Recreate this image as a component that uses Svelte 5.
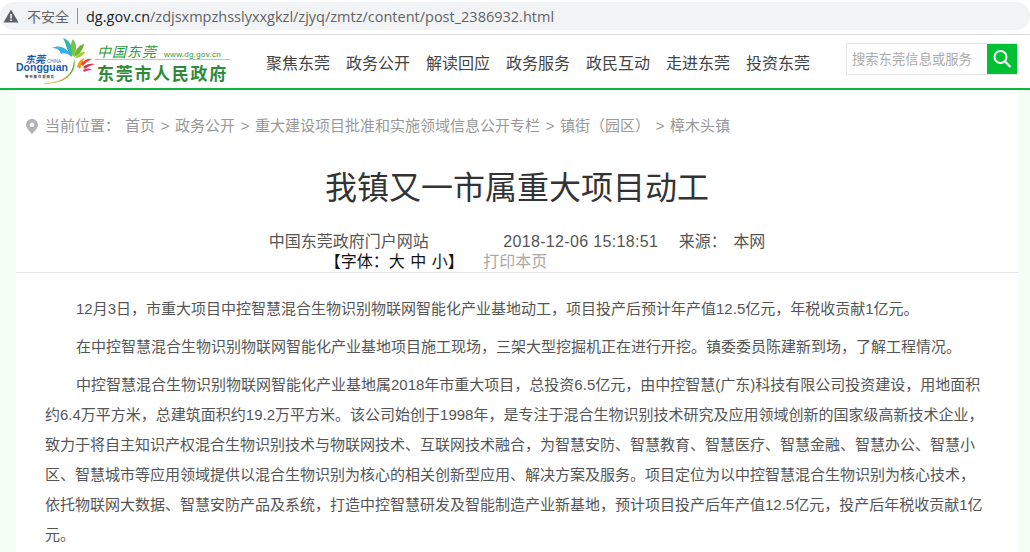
<script lang="ts">
  const navItems = ['聚焦东莞', '政务公开', '解读回应', '政务服务', '政民互动', '走进东莞', '投资东莞']
  const crumbs = ['首页', '政务公开', '重大建设项目批准和实施领域信息公开专栏', '镇街（园区）', '樟木头镇']
  const paragraphs = [
    '12月3日，市重大项目中控智慧混合生物识别物联网智能化产业基地动工，项目投产后预计年产值12.5亿元，年税收贡献1亿元。',
    '在中控智慧混合生物识别物联网智能化产业基地项目施工现场，三架大型挖掘机正在进行开挖。镇委委员陈建新到场，了解工程情况。',
    '中控智慧混合生物识别物联网智能化产业基地属2018年市重大项目，总投资6.5亿元，由中控智慧(广东)科技有限公司投资建设，用地面积约6.4万平方米，总建筑面积约19.2万平方米。该公司始创于1998年，是专注于混合生物识别技术研究及应用领域创新的国家级高新技术企业，致力于将自主知识产权混合生物识别技术与物联网技术、互联网技术融合，为智慧安防、智慧教育、智慧医疗、智慧金融、智慧办公、智慧小区、智慧城市等应用领域提供以混合生物识别为核心的相关创新型应用、解决方案及服务。项目定位为以中控智慧混合生物识别为核心技术，依托物联网大数据、智慧安防产品及系统，打造中控智慧研发及智能制造产业新基地，预计项目投产后年产值12.5亿元，投产后年税收贡献1亿元。'
  ]
</script>

<div class="browser-bar">
  <div class="omnibox">
    <svg class="warn" viewBox="0 0 16 14" width="16" height="14"><path d="M8 0.5 L15.5 13.5 H0.5 Z" fill="#5f6368"/><rect x="7.2" y="5" width="1.6" height="4.5" fill="#f1f3f4"/><rect x="7.2" y="10.4" width="1.6" height="1.6" fill="#f1f3f4"/></svg>
    <span class="insecure">不安全</span>
    <span class="divider"></span>
    <span class="url"><b>dg.gov.cn</b>/zdjsxmpzhsslyxxgkzl/zjyq/zmtz/content/post_2386932.html</span>
  </div>
</div>

<header class="site-header">
  <svg class="logo" viewBox="0 0 225 50" width="225" height="50">
    <!-- petals -->
    <path d="M62 20 C58 11 49 7 42 11 C47 11 50 13 51 17 C54 15 58 17 62 20 Z" fill="#2fb2e8"/>
    <path d="M62 20 C56 13 56 6 53 1 C60 3 64 11 62 20 Z" fill="#2fb8a8"/>
    <path d="M63 20 C60 12 60 7 63 2 C67 7 67 14 63 20 Z" fill="#7cc242"/>
    <path d="M64 20 C65 13 69 8 74 7 C73 13 69 18 64 20 Z" fill="#6ab42d"/>
    <path d="M65 21 C68 16 72 14 75 15 C73 19 69 21 65 21 Z" fill="#a6cf3c"/>
    <!-- stem -->
    <path d="M35 46 C50 47 64 40 64 21 C68 36 54 48 35 46 Z" fill="#5fae2e"/>
    <path d="M34 47 C44 46 54 43 60 37" fill="none" stroke="#f3a43a" stroke-width="0.7"/>
    <!-- red bloom -->
    <path d="M67 30 C68 25 71 22 74 21 C73 25 72 28 70 32 Z" fill="#f39a1e"/>
    <path d="M71 27 C74 23 78 21 82 22 C78 24 75 26 73 29 Z" fill="#e8452f"/>
    <path d="M73 30 C76 27 81 26 85 27 C81 28 77 30 75 32 Z" fill="#d9304f"/>
    <path d="M73 33 C76 31 80 31 82 33 C79 33 76 34 74 35 Z" fill="#e23c72"/>
    <!-- dongguan wordmark -->
    <text x="15" y="26" class="dg-cn">东莞</text>
    <text x="37" y="26" class="dg-china">CHINA</text>
    <text x="6" y="34" class="dg-en">Dongguan</text>
    <text x="15" y="41" class="dg-tag">每天都在更精彩</text>
    <!-- site name -->
    <text x="87" y="20" class="cn-brush">中国东莞</text>
    <text x="154" y="20" class="cn-url">www.dg.gov.cn</text>
    <rect x="85" y="22" width="135" height="1" fill="#a9d6a4"/>
    <text x="87" y="42.5" class="cn-gov">东莞市人民政府</text>
  </svg>
  <nav class="main-nav">
    {#each navItems as item}
      <span class="nav-item">{item}</span>
    {/each}
  </nav>
  <div class="search">
    <span class="placeholder">搜索东莞信息或服务</span>
    <span class="search-btn">
      <svg viewBox="0 0 20 20" width="20" height="20"><circle cx="8.5" cy="8" r="6" fill="none" stroke="#fff" stroke-width="2"/><path d="M13 12.5 L18.5 18" stroke="#fff" stroke-width="2.2"/></svg>
    </span>
  </div>
</header>

<main class="page">
  <div class="content">
    <div class="crumbs">
      <svg class="pin" viewBox="0 0 12 15" width="12" height="15"><path fill-rule="evenodd" d="M6 0 C9.3 0 12 2.6 12 5.8 C12 9.6 6 15 6 15 C6 15 0 9.6 0 5.8 C0 2.6 2.7 0 6 0 Z M6 3.6 A2.3 2.3 0 1 0 6 8.2 A2.3 2.3 0 1 0 6 3.6 Z" fill="#b3b3b3"/></svg>
      <span class="here">当前位置：</span>
      {#each crumbs as crumb, i}
        {#if i > 0}<span class="sep">&gt;</span>{/if}
        <span>{crumb}</span>
      {/each}
    </div>

    <h1>我镇又一市属重大项目动工</h1>

    <div class="meta">
      <span>中国东莞政府门户网站</span>
      <span class="date">2018-12-06 15:18:51</span>
      <span class="source">来源：</span>
      <span class="origin">本网</span>
    </div>
    <div class="tools">
      <span class="font-size">【字体：大 中 小】</span>
      <span class="print">打印本页</span>
    </div>

    <article>
      {#each paragraphs as p}
        <p>{p}</p>
      {/each}
    </article>
  </div>
</main>

<style>
  :global(body) {
    margin: 0;
    background: #fff;
    font-family: "Liberation Sans", "Noto Sans CJK SC", sans-serif;
    overflow: hidden;
    height: 552px;
  }

  .browser-bar {
    height: 35px;
    box-sizing: border-box;
    padding-top: 2px;
    border-bottom: 1px solid #dcdcdc;
  }

  .omnibox {
    height: 28px;
    background: #f1f3f4;
    border-radius: 14px;
    display: flex;
    align-items: center;
    padding-left: 3px;
  }

  .warn {
    margin-right: 8px;
  }

  .insecure {
    font-size: 14px;
    color: #5f6368;
  }

  .divider {
    width: 1px;
    height: 16px;
    background: #8a8d91;
    margin: 0 8px;
  }

  .url {
    font-size: 14.5px;
    color: #5f6368;
    font-family: "Open Sans", sans-serif;
    white-space: nowrap;
  }

  .url b {
    font-weight: 400;
    color: #202124;
  }

  .site-header {
    height: 55px;
    box-sizing: border-box;
    border-bottom: 2px solid #0cb83a;
    display: flex;
    align-items: flex-start;
    padding-left: 10px;
    position: relative;
  }

  .logo {
    flex: none;
    margin-top: 2px;
  }

  .logo text {
    font-family: "Noto Sans CJK SC", sans-serif;
  }

  .logo .dg-cn {
    font-size: 10px;
    font-weight: 700;
    font-style: italic;
    fill: #1a5ca8;
  }

  .logo .dg-china {
    font-size: 4.5px;
    fill: #3a6fb0;
    font-family: "Liberation Sans", sans-serif;
  }

  .logo .dg-en {
    font-size: 10.5px;
    font-weight: 700;
    fill: #1a5ca8;
    font-family: "Liberation Sans", sans-serif;
  }

  .logo .dg-tag {
    font-size: 3.5px;
    font-weight: 700;
    letter-spacing: 0.8px;
    fill: #444;
  }

  .logo .cn-brush {
    font-size: 14px;
    font-weight: 400;
    font-style: italic;
    letter-spacing: 1px;
    fill: #2f9a3b;
  }

  .logo .cn-url {
    font-size: 8px;
    letter-spacing: 0.3px;
    fill: #2f9a3b;
    font-family: "Liberation Sans", sans-serif;
  }

  .logo .cn-gov {
    font-size: 17px;
    font-weight: 700;
    letter-spacing: 1.7px;
    fill: #2f8a3a;
  }

  .main-nav {
    display: flex;
    margin-left: 31px;
    margin-top: 18px;
  }

  .nav-item {
    width: 64px;
    margin-right: 16px;
    font-size: 16px;
    line-height: 22px;
    color: #444;
    white-space: nowrap;
  }

  .search {
    position: absolute;
    top: 8px;
    left: 846px;
    width: 172px;
    height: 32px;
    box-sizing: border-box;
    border: 1px solid #e4e4e4;
    display: flex;
    align-items: center;
    justify-content: space-between;
    padding-left: 5px;
  }

  .placeholder {
    font-size: 13.33px;
    color: #aaa;
    white-space: nowrap;
    margin-bottom: 2px;
  }

  .search-btn {
    width: 30px;
    height: 30px;
    background: #00c133;
    display: flex;
    align-items: center;
    justify-content: center;
  }

  .page {
    background: #f5fff5;
    padding: 0 12px 0 16px;
    height: 462px;
    overflow: hidden;
  }

  .content {
    background: #fff;
    height: 100%;
  }

  .crumbs {
    padding: 25px 0 0 10px;
    display: flex;
    align-items: center;
    font-size: 15px;
    line-height: 22px;
    color: #999;
    white-space: pre;
  }

  .pin {
    margin-right: 7px;
  }

  .here {
    margin-right: 5px;
  }

  .sep {
    margin: 0 5px;
    width: 10px;
    text-align: center;
  }

  h1 {
    margin: 28px 0 0;
    text-align: center;
    font-size: 32px;
    line-height: 46px;
    font-weight: 400;
    color: #333;
  }

  .meta {
    margin-top: 20px;
    text-align: center;
    font-size: 16px;
    line-height: 21px;
    color: #555;
    white-space: pre;
  }

  .date {
    margin-left: 70px;
    letter-spacing: 0.35px;
  }

  .source {
    margin-left: 16px;
  }

  .origin {
    margin-left: 2px;
  }

  .tools {
    text-align: center;
    font-size: 16px;
    line-height: 20px;
    padding-right: 162px;
    border-bottom: 1px solid #e5e5e5;
  }

  .font-size {
    color: #111;
    word-spacing: 1px;
  }

  .print {
    margin-left: 15px;
    color: #aaa;
  }

  article {
    padding: 21px 33px 0 29px;
  }

  p {
    margin: 0 0 8px;
    font-size: 15px;
    line-height: 30px;
    color: #555;
    text-indent: 31px;
  }
</style>
